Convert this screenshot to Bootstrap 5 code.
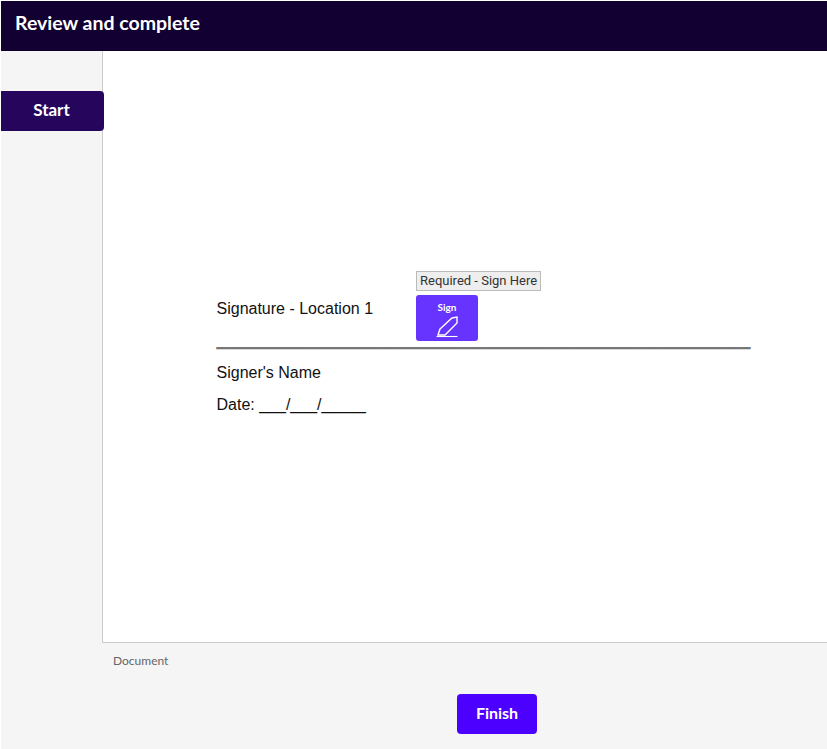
<!DOCTYPE html>
<html lang="en">
<head>
    <meta charset="UTF-8">
    <meta name="viewport" content="width=device-width, initial-scale=1.0">
    <title>Review and complete</title>
    <link href="https://cdn.jsdelivr.net/npm/bootstrap@5.3.0/dist/css/bootstrap.min.css" rel="stylesheet">
    <style>
        html, body { height: 100%; }
        body { background: #fff; overflow: hidden; font-family: Lato, sans-serif; }
        .signing-shell { position: absolute; left: 1px; top: 1px; right: 0; bottom: 0; background: #f5f5f5; }
        .review-bar { height: 50px; background: #130032; color: #fff; padding: 0 0 6px 14px; font-size: 19.5px; font-weight: 700; }
        .doc-row { height: 592px; padding-left: 101px; }
        .doc-page { position: relative; height: 100%; background: #fff; border-left: 1px solid #ccc; border-bottom: 1px solid #ccc; padding: 248px 0 0 113.5px; font-family: "Liberation Sans", sans-serif; font-size: 16px; color: #111; }
        .doc-page p { margin: 0; }
        .sig-label { line-height: 20px; }
        .sig-line { line-height: 20px; margin-top: 11px !important; white-space: nowrap; color: #777; text-shadow: 0 1px 0 #777; }
        .signer-name { line-height: 20px; margin-top: 13px !important; }
        .sign-date { line-height: 20px; margin-top: 12px !important; }
        .tab-tip { position: absolute; left: 313px; top: 220px; height: 20px; line-height: 18px; padding: 0 3px; background: #eee; border: 1px solid #bbb; font-family: Roboto, sans-serif; font-size: 13px; color: #333; white-space: nowrap; }
        .sign-tab { position: absolute; left: 313px; top: 244px; width: 62px; height: 46px; background: #6633ff; border: 0; border-radius: 3px; color: #fff; font-family: Lato, sans-serif; font-size: 10px; font-weight: 700; line-height: 12px; padding: 2px 0 0; }
        .sign-tab svg { display: block; margin: 3px auto 0; }
        .start-btn { position: absolute; left: 0; top: 90px; z-index: 2; width: 103px; height: 40px; background: #26065d; color: #fff; border: 0; border-radius: 0 4px 4px 0; font-size: 17px; font-weight: 700; padding: 0 2px 2px 0; }
        .doc-caption { padding: 10px 0 0 112px; font-size: 12px; line-height: 15px; color: #666; }
        .finish-btn { width: 80px; height: 40px; background: #4c00ff; color: #fff; border: 0; border-radius: 4px; font-size: 16px; font-weight: 700; padding: 0 0 2px; margin-top: 26px; margin-left: 456px; display: block; }
    </style>
</head>
<body>
    <div class="signing-shell">
        <div class="review-bar d-flex align-items-center">Review and complete</div>
        <button type="button" class="btn start-btn">Start</button>
        <div class="doc-row">
            <div class="doc-page">
                <p class="sig-label">Signature - Location 1</p>
                <p class="sig-line">____________________________________________________________</p>
                <p class="signer-name">Signer's Name</p>
                <p class="sign-date">Date: ___/___/_____</p>
                <div class="tab-tip">Required - Sign Here</div>
                <button type="button" class="sign-tab">Sign
                    <svg width="22" height="22" viewBox="0 0 22 22" fill="none" stroke="#fff" stroke-width="1.4">
                        <path d="M4 13 L16 2 L21 1 L21 7 L9 19 L2 19 Z"/>
                        <path d="M0.5 20.5 H21.5" stroke-width="1.1"/>
                    </svg>
                </button>
            </div>
        </div>
        <div class="doc-caption">Document</div>
        <button type="button" class="btn finish-btn">Finish</button>
    </div>
    <script src="https://cdn.jsdelivr.net/npm/bootstrap@5.3.0/dist/js/bootstrap.bundle.min.js"></script>
</body>
</html>
